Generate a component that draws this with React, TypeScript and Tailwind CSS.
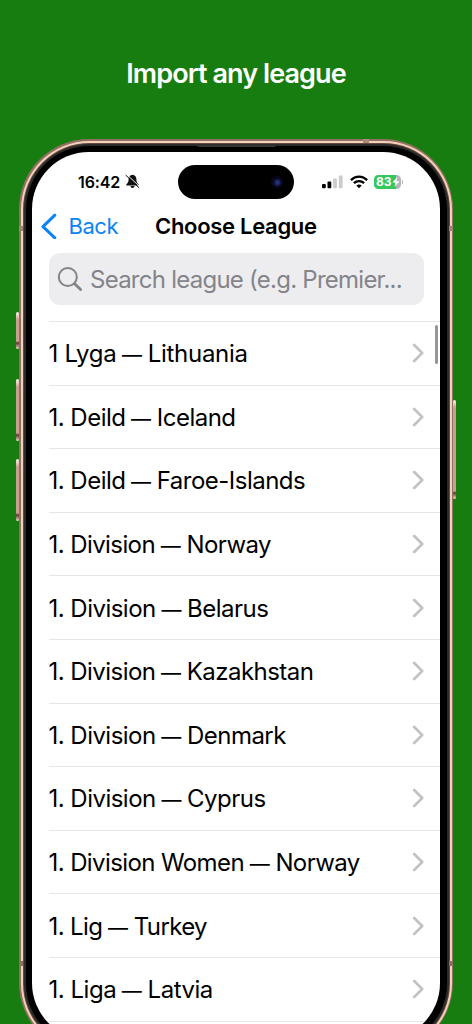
import React from 'react';

const LEAGUES = [
    { name: '1 Lyga', country: 'Lithuania', tracking: 'tracking-[-0.3px]' },
    { name: '1. Deild', country: 'Iceland', tracking: 'tracking-[-0.52px]' },
    { name: '1. Deild', country: 'Faroe-Islands', tracking: 'tracking-[-0.52px]' },
    { name: '1. Division', country: 'Norway', tracking: 'tracking-[-0.58px]' },
    { name: '1. Division', country: 'Belarus', tracking: 'tracking-[-0.52px]' },
    { name: '1. Division', country: 'Kazakhstan', tracking: 'tracking-[-0.55px]' },
    { name: '1. Division', country: 'Denmark', tracking: 'tracking-[-0.53px]' },
    { name: '1. Division', country: 'Cyprus', tracking: 'tracking-[-0.52px]' },
    { name: '1. Division Women', country: 'Norway', tracking: 'tracking-[-0.6px]' },
    { name: '1. Lig', country: 'Turkey', tracking: 'tracking-[-0.62px]' },
    { name: '1. Liga', country: 'Latvia', tracking: 'tracking-[-0.48px]' },
];

const BellOff = () => (
    <svg className="w-[15px] h-[15px] shrink-0" viewBox="0 0 15 15" fill="none">
        <path d="M7.5 0.8C4.9 1 3.6 3 3.6 5.2C3.6 8.2 2.6 9 1.3 10.6V11.4H13.7V10.6C12.4 9 11.4 8.2 11.4 5.2C11.4 3 10.1 1 7.5 0.8Z" fill="#111" />
        <path d="M5.4 12.1H9.6C9.4 13.4 8.5 14 7.5 14S5.6 13.4 5.4 12.1Z" fill="#111" />
        <path d="M1.6 0.4L15 12.8" stroke="#fff" strokeWidth="0.9" />
        <path d="M0.9 1.3L13.9 13.6" stroke="#111" strokeWidth="1" strokeLinecap="round" />
    </svg>
);

const Signal = () => (
    <svg className="w-[21px] h-[14px]" viewBox="0 0 21 14">
        <rect x="0" y="9" width="3.8" height="4.2" rx="0.9" fill="#000" />
        <rect x="5.5" y="6.5" width="3.8" height="6.7" rx="0.9" fill="#000" />
        <rect x="11.1" y="3.5" width="3.8" height="9.7" rx="0.9" fill="#ccc" />
        <rect x="16.8" y="0.6" width="3.8" height="12.6" rx="0.9" fill="#ccc" />
    </svg>
);

const Wifi = () => (
    <svg className="w-[18px] h-[14px]" viewBox="0 0 18 14" fill="none" stroke="#000" strokeWidth="2.3">
        <path d="M0.9 5.1C5.4 0.5 12.6 0.5 17.1 5.1" />
        <path d="M3.9 8.2C6.8 5.4 11.2 5.4 14.1 8.2" />
        <path d="M9 13.2L6.3 10.5C7.8 9.1 10.2 9.1 11.7 10.5Z" fill="#000" stroke="none" />
    </svg>
);

const Battery = () => (
    <div className="flex items-center">
        <div className="relative flex items-center w-[26.5px] h-[14px] rounded-[4.5px] overflow-hidden bg-[linear-gradient(90deg,#34c759_83%,#b5b5b9_83%)]">
            <span className="pl-[2px] text-[12px] leading-[14px] font-bold tracking-[-0.1px] text-white">83</span>
            <svg className="absolute left-[18px] top-[2px] w-[8px] h-[10px]" viewBox="0 0 8 10" fill="#fff">
                <path d="M5.2 0L0.4 5.6H3.4L2.5 10L7.6 4.2H4.5Z" />
            </svg>
        </div>
        <div className="ml-[1px] w-[1.5px] h-[4px] rounded-r-full bg-[#b5b5b9]" />
    </div>
);

const StatusBar = () => (
    <div className="flex h-[60px] pt-[13px] shrink-0">
        <div className="w-[146px] pl-[46px] h-[33px] flex items-center">
            <span className="w-[46.5px] text-[16px] font-semibold tracking-[-0.1px] text-black">16:42</span>
            <BellOff />
        </div>
        {/* Dynamic island */}
        <div className="w-[116px] h-[34px] rounded-full bg-black flex items-center justify-end pr-[11px]">
            <div className="w-[12px] h-[12px] rounded-full bg-[#09071a] flex items-center justify-center">
                <div className="w-[7px] h-[7px] rounded-full bg-[radial-gradient(circle,#24327c_20%,#10113b_80%)]" />
            </div>
        </div>
        <div className="flex h-[33px] items-center pl-[28px]">
            <Signal />
            <div className="ml-[7px]"><Wifi /></div>
            <div className="ml-[6px]"><Battery /></div>
        </div>
    </div>
);

const NavBar = () => (
    <div className="h-[30px] flex items-center shrink-0 pl-[9px]">
        <svg className="w-[16px] h-[26px] -mt-[2px]" viewBox="0 0 16 26" fill="none" stroke="#0a84f5" strokeWidth="3" strokeLinecap="round" strokeLinejoin="round">
            <path d="M13.8 2.2L2 13.6L13.8 24.8" />
        </svg>
        <span className="w-[87px] pl-[11.5px] -mt-[2px] text-[22px] leading-[30px] tracking-[-0.45px] text-[#0a84f5]">Back</span>
        <span className="pl-[11px] -mt-[2px] text-[22px] leading-[30px] font-semibold tracking-[-0.3px] text-black whitespace-nowrap">Choose League</span>
    </div>
);

const SearchField = () => (
    <div className="mx-[16.5px] mt-[11px] mb-[16px] h-[52px] shrink-0 rounded-[11px] bg-[#ededf0] flex items-center pl-[8.5px]">
        <svg className="w-[26px] h-[26px] shrink-0" viewBox="0 0 26 26" fill="none" stroke="#828287" strokeLinecap="round">
            <circle cx="10.8" cy="11" r="9" strokeWidth="2" />
            <path d="M17.6 17.8L23.6 23.6" strokeWidth="2.8" />
        </svg>
        <span className="pl-[7px] pt-[2px] text-[24px] leading-[30px] tracking-[-0.75px] text-[#848489] whitespace-nowrap">Search league (e.g. Premier...</span>
    </div>
);

const LeagueRow = ({ name, country, tracking }: { name: string; country: string; tracking: string }) => (
    <div className="ml-[16.5px] h-[63.6px] shrink-0 border-t border-[#e6e6e7] flex items-center justify-between pr-[16.5px]">
        <span className={`text-[24px] leading-[30px] text-black whitespace-nowrap pt-[3px] ${tracking}`}>
            {name}
            <span className="text-[20px] tracking-[0.05px]"> — </span>
            {country}
        </span>
        <svg className="w-[12px] h-[20px] shrink-0" viewBox="0 0 12 20" fill="none" stroke="#c2c2c5" strokeWidth="2.6" strokeLinecap="round" strokeLinejoin="round">
            <path d="M2.2 2L10.2 10L2.2 18" />
        </svg>
    </div>
);

// Side keys sit just outside the metal rim
const KEY = 'absolute w-[3px] rounded-[1.5px] bg-[linear-gradient(180deg,#fff3ea_0px,#c99f8d_8px,#c99f8d_calc(100%-8px),#5d3c33_calc(100%-6px),#eed5c6_100%)]';

export default function App() {
    return (
        <div className="w-[472px] h-[1024px] overflow-hidden bg-[#187d10] flex flex-col font-['Inter',sans-serif]">
            <h1 className="h-[139px] shrink-0 pt-[56px] text-center text-[27px] leading-[36px] font-semibold tracking-[-0.92px] text-white">
                Import any league
            </h1>

            {/* PHONE */}
            <div className="relative ml-[19px] w-[434px] h-[914px] shrink-0">
                <div className={`${KEY} left-[-3px] top-[173px] h-[37px]`} />
                <div className={`${KEY} left-[-3px] top-[240px] h-[62px]`} />
                <div className={`${KEY} left-[-3px] top-[320px] h-[62px]`} />
                <div className={`${KEY} right-[-3px] top-[261px] h-[99px]`} />

                <div className="h-full rounded-[70px] bg-[#927064] p-[1.5px]">
                    <div className="h-full rounded-[68.5px] bg-[#f3d1bb] p-[2px]">
                        <div className="h-full rounded-[66.5px] bg-[#65483d] p-[1px]">
                            <div className="h-full rounded-[65.5px] bg-[#2b2b2b] p-[2px]">
                                <div className="h-full rounded-[63.5px] bg-black p-[6.5px]">
                                    <div className="relative h-full rounded-[57px] bg-white overflow-hidden flex flex-col">
                                        <StatusBar />
                                        <NavBar />
                                        <SearchField />
                                        <div className="flex flex-col">
                                            {LEAGUES.map((league) => (
                                                <LeagueRow key={`${league.name}-${league.country}`} {...league} />
                                            ))}
                                            <div className="ml-[16.5px] h-px bg-[#e6e6e7]" />
                                        </div>
                                        {/* Scroll indicator */}
                                        <div className="absolute right-[2px] top-[173px] w-[3.5px] h-[39px] rounded-full bg-[#969696]" />
                                    </div>
                                </div>
                            </div>
                        </div>
                    </div>
                </div>

                {/* Antenna bands */}
                <div className="absolute left-0 top-[87px] w-[4px] h-[5px] bg-[#a58273]" />
                <div className="absolute right-0 top-[87px] w-[4px] h-[5px] bg-[#a58273]" />
                <div className="absolute left-0 top-[822px] w-[4px] h-[5px] bg-[#8d7160]" />
                <div className="absolute right-0 top-[822px] w-[4px] h-[5px] bg-[#8d7160]" />
                <div className="absolute right-[84px] top-0 w-[6px] h-[4px] bg-[#ad8977]" />
                {/* Earpiece */}
                <div className="absolute left-[178px] top-[5.5px] w-[79px] h-[2px] rounded-b-full bg-[#363334]" />
            </div>
        </div>
    );
}
